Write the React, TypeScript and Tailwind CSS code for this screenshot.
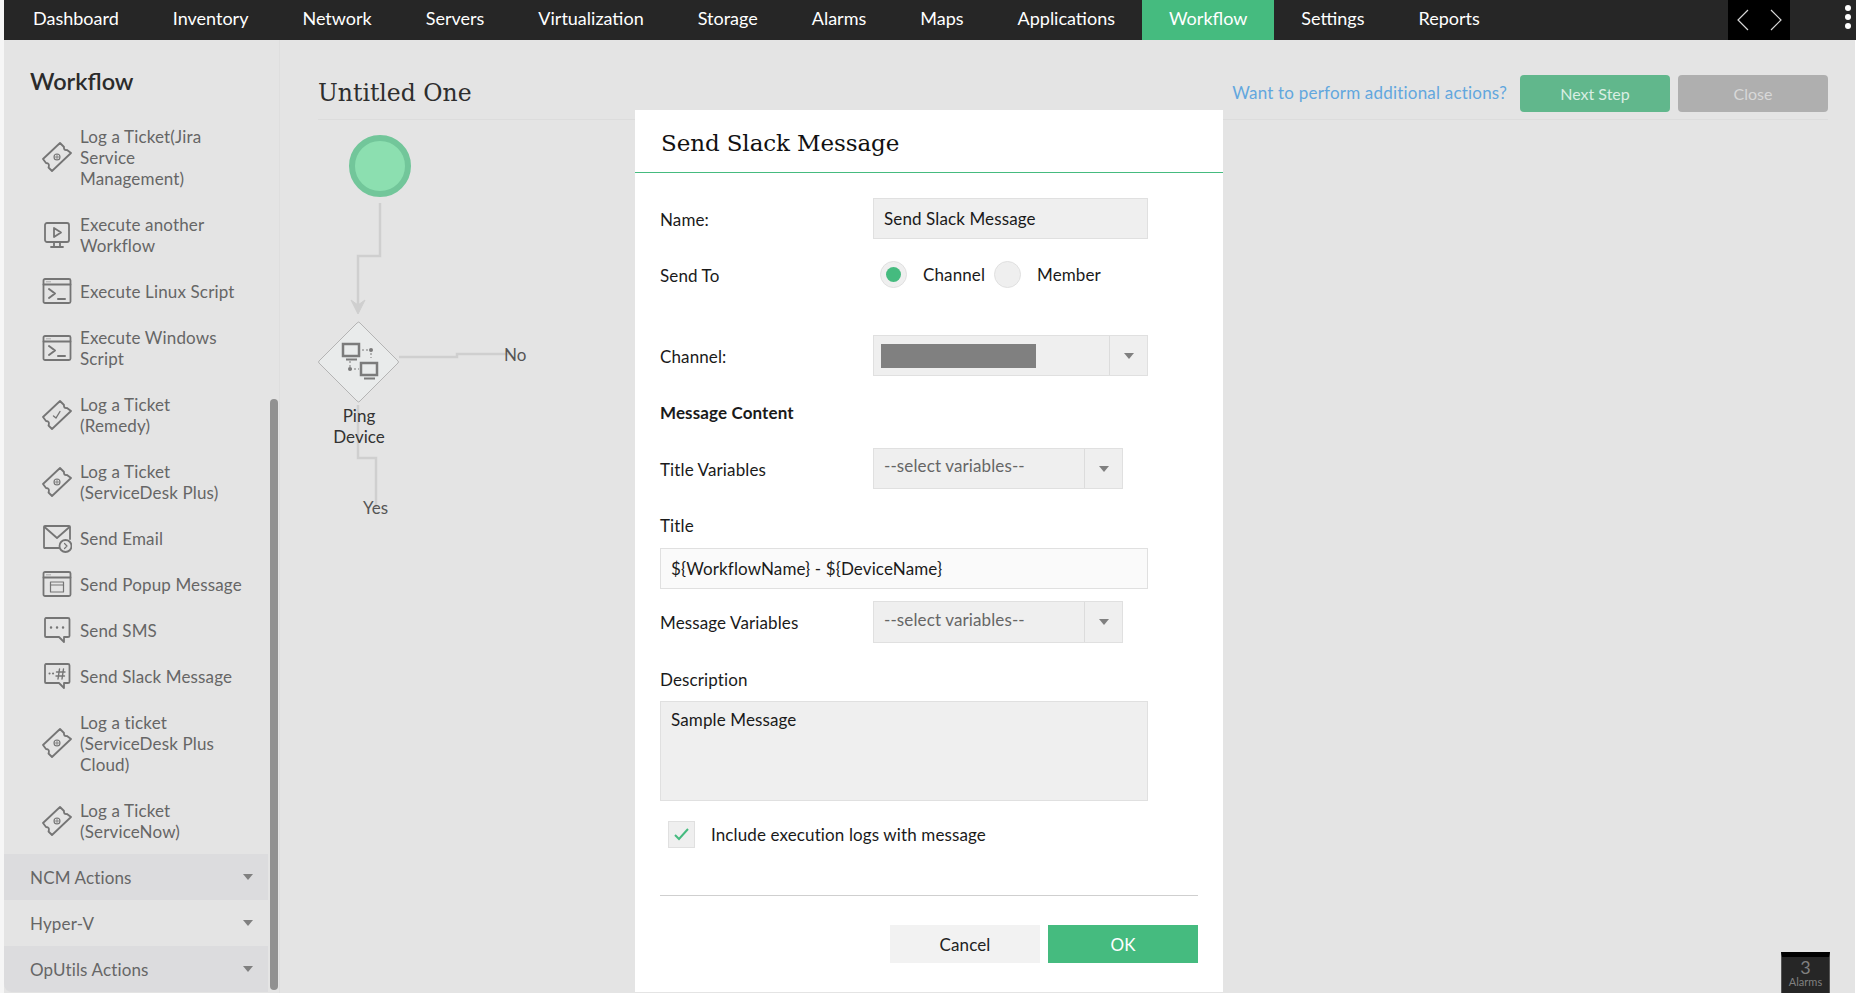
const navItems = ["Dashboard", "Inventory", "Network", "Servers", "Virtualization", "Storage", "Alarms", "Maps", "Applications", "Workflow", "Settings", "Reports"];

type IconName = "ticket" | "check" | "play" | "term" | "mail" | "popup" | "sms" | "slack";

const actions: { icon: IconName; lines: string[] }[] = [
  { icon: "ticket", lines: ["Log a Ticket(Jira", "Service", "Management)"] },
  { icon: "play", lines: ["Execute another", "Workflow"] },
  { icon: "term", lines: ["Execute Linux Script"] },
  { icon: "term", lines: ["Execute Windows", "Script"] },
  { icon: "check", lines: ["Log a Ticket", "(Remedy)"] },
  { icon: "ticket", lines: ["Log a Ticket", "(ServiceDesk Plus)"] },
  { icon: "mail", lines: ["Send Email"] },
  { icon: "popup", lines: ["Send Popup Message"] },
  { icon: "sms", lines: ["Send SMS"] },
  { icon: "slack", lines: ["Send Slack Message"] },
  { icon: "ticket", lines: ["Log a ticket", "(ServiceDesk Plus", "Cloud)"] },
  { icon: "ticket", lines: ["Log a Ticket", "(ServiceNow)"] },
];

function ActionIcon({ name }: { name: IconName }) {
  const common = { fill: "none", stroke: "#757575", strokeWidth: 1.8, strokeLinejoin: "round" as const, strokeLinecap: "round" as const, className: "-my-[5px] shrink-0" };
  if (name === "ticket" || name === "check") {
    return (
      <svg width="30" height="30" viewBox="0 0 30 30" {...common}>
        <path d="M1 17 L18 1 L22 5 Q21.5 8.5 25 8 L29 11 L10 29 L6.5 25.5 Q8 21 4 21 Z" />
        {name === "ticket" ? (
          <>
            <circle cx="15" cy="15" r="3" strokeWidth="1.1" />
            <path d="M12.5 15 H17.5 M15 12.5 V17.5" strokeWidth="0.8" />
          </>
        ) : (
          <path d="M11.5 16 L14 18 L18 11.5" strokeWidth="1.4" />
        )}
      </svg>
    );
  }
  if (name === "play") {
    return (
      <svg width="30" height="30" viewBox="0 0 30 30" {...common}>
        <rect x="3" y="3" width="24" height="19" rx="2" />
        <path d="M12 8 L19 12.5 L12 17 Z" />
        <path d="M12 22 V27 M18 22 V27 M9 27 H21" />
      </svg>
    );
  }
  if (name === "term") {
    return (
      <svg width="30" height="30" viewBox="0 0 30 30" {...common}>
        <rect x="1.5" y="3" width="27" height="24" rx="1.5" />
        <path d="M1.5 8.5 H28.5" />
        <path d="M4.5 5.8 H9" strokeWidth="1" strokeDasharray="1 1" strokeLinecap="butt" />
        <path d="M7 13 L13 17.5 L7 22 M16 23 H23" strokeWidth="2" />
      </svg>
    );
  }
  if (name === "mail") {
    return (
      <svg width="30" height="30" viewBox="0 0 30 30" {...common}>
        <path d="M17 25 H2.5 Q2 25 2 24 V4 Q2 3 3 3 H27 Q28 3 28 4 V16" />
        <path d="M2.5 4 L15 15 L27.5 4" />
        <circle cx="23.5" cy="23" r="6" />
        <path d="M22.5 20.5 L25 23 L22.5 25.5" strokeWidth="1.2" />
      </svg>
    );
  }
  if (name === "popup") {
    return (
      <svg width="30" height="30" viewBox="0 0 30 30" {...common}>
        <rect x="1.5" y="3" width="27" height="24" rx="1.5" />
        <path d="M1.5 8.5 H28.5" />
        <path d="M4.5 5.8 H9" strokeWidth="1" strokeDasharray="1 1" strokeLinecap="butt" />
        <rect x="8.5" y="13" width="13" height="10" strokeWidth="1.2" />
        <path d="M8.5 16 H21.5" strokeWidth="1.2" />
      </svg>
    );
  }
  return (
    <svg width="30" height="30" viewBox="0 0 30 30" {...common}>
      <path d="M4 3 H26 Q27.5 3 27.5 4.5 V21 Q27.5 22 26 22 H22 V27 L17 22 H4 Q3 22 3 21 V4.5 Q3 3 4 3 Z" />
      {name === "sms" ? (
        <path d="M9 12.5 H9.1 M15 12.5 H15.1 M21 12.5 H21.1" strokeWidth="2.4" />
      ) : (
        <>
          <path d="M7.5 12.5 H7.6 M11 12.5 H11.1" strokeWidth="2" />
          <path d="M17.5 8 L16 18 M21.5 8 L20 18 M14.5 11 H23 M14 15 H22.5" strokeWidth="1.4" />
        </>
      )}
    </svg>
  );
}

function Caret({ className = "" }: { className?: string }) {
  return <span className={"block w-0 h-0 border-l-[5px] border-r-[5px] border-t-[6px] border-l-transparent border-r-transparent border-t-[#808080] " + className} />;
}

function SelectBox({ width, sep, h = "h-[41px]", children }: { width: string; sep: string; h?: string; children?: React.ReactNode }) {
  return (
    <div className={`flex ${width} ${h} bg-[#efefef] border border-[#e0e0e0]`}>
      <div className="flex-1 min-w-0 flex items-center">{children}</div>
      <div className={`${sep} flex items-center justify-center border-l border-[#dcdcdc]`}>
        <Caret />
      </div>
    </div>
  );
}

function FlowCanvas() {
  return (
    <div className="relative flex-1">
      <svg width="300" height="420" className="absolute left-0 top-0" viewBox="0 0 300 420" fill="none">
        <circle cx="62" cy="46" r="28" fill="#8cdfb0" stroke="#72c69a" strokeWidth="6" />
        <path d="M62 83 V136 H40 V190" stroke="#cfcfcf" strokeWidth="2.5" />
        <path d="M33 180 L40 194 L47 180 L40 185 Z" fill="#cfcfcf" stroke="#cfcfcf" />
        <path d="M42 203 L80 241 Q81 242 80 243 L42 281 Q41 283 39 281 L1 243 Q0 242 1 241 L39 203 Q41 201 42 203 Z" fill="#e9ebeb" stroke="#b4b4b4" />
        <path d="M81 237 H139 V234 H192" stroke="#cfcfcf" strokeWidth="2.5" />
        <path d="M40 285 V338 H58 V388" stroke="#cfcfcf" strokeWidth="2.5" />
        <g stroke="#7b7b7b" fill="none">
          <rect x="25" y="224" width="16" height="12" strokeWidth="2.5" />
          <path d="M28 239.5 H39" strokeWidth="2" />
          <rect x="43" y="243" width="16" height="12" strokeWidth="2.5" />
          <path d="M46 258.5 H57" strokeWidth="2" />
          <path d="M44 230 H53 V238 M32 241 V249 H41" strokeWidth="1" strokeDasharray="2 2" />
        </g>
        <circle cx="53" cy="230" r="2" fill="#7b7b7b" />
        <circle cx="32" cy="249" r="2" fill="#7b7b7b" />
      </svg>
      <div className="absolute left-[0px] top-[285px] w-[82px] text-center text-[17px] leading-[21px] text-[#333]">
        Ping
        <br />
        Device
      </div>
      <span className="absolute left-[186px] top-[224px] text-[17px] leading-[21px] text-[#555]">No</span>
      <span className="absolute left-[45px] top-[377px] text-[17px] leading-[21px] text-[#555]">Yes</span>
    </div>
  );
}

function SlackModal() {
  return (
    <div className="absolute left-[635px] top-[110px] w-[588px] h-[882px] bg-white text-[17px] leading-[21px] tracking-[0.12px] text-[#1a1a1a]">
      <div className="h-[63px] flex items-center pl-[26px] pt-[5px] border-b border-[#45bb7f] text-[23px] tracking-[-0.1px] text-[#111] [font-family:'DejaVu_Serif',serif]">
        Send Slack Message
      </div>
      <div className="pl-[25px] pr-[25px]">
        <div className="mt-[25px] flex items-center">
          <label className="w-[213px] pt-[2px]">Name:</label>
          <div className="w-[275px] h-[41px] flex items-center px-[10px] bg-[#efefef] border border-[#e0e0e0]">Send Slack Message</div>
        </div>
        <div className="mt-[22px] flex items-center h-[27px]">
          <label className="w-[220px] pt-[2px]">Send To</label>
          <span className="w-[27px] h-[27px] rounded-full bg-[#efefef] border border-[#e0e0e0] flex items-center justify-center">
            <span className="w-[15px] h-[15px] rounded-full bg-[#45bb7f]" />
          </span>
          <span className="ml-[16px] w-[71px]">Channel</span>
          <span className="w-[27px] h-[27px] rounded-full bg-[#efefef] border border-[#e0e0e0]" />
          <span className="ml-[16px]">Member</span>
        </div>
        <div className="mt-[47px] flex items-center">
          <label className="w-[213px] pt-[2px]">Channel:</label>
          <SelectBox width="w-[275px]" sep="w-[38px]">
            <span className="ml-[7px] w-[155px] h-[24px] bg-[#808080]" />
          </SelectBox>
        </div>
        <div className="mt-[26px] font-bold">Message Content</div>
        <div className="mt-[25px] flex items-center">
          <label className="w-[213px] pt-[2px]">Title Variables</label>
          <SelectBox width="w-[250px]" sep="w-[38px]">
            <span className="ml-[10px] -mt-[6px] text-[#666]">--select variables--</span>
          </SelectBox>
        </div>
        <div className="mt-[26px]">Title</div>
        <div className="mt-[12px] w-[488px] h-[41px] flex items-center px-[10px] bg-[#fafafa] border border-[#e0e0e0]">
          {"${WorkflowName} - ${DeviceName}"}
        </div>
        <div className="mt-[12px] flex items-center">
          <label className="w-[213px]">Message Variables</label>
          <SelectBox width="w-[250px]" sep="w-[38px]" h="h-[42px]">
            <span className="ml-[10px] -mt-[6px] text-[#666]">--select variables--</span>
          </SelectBox>
        </div>
        <div className="mt-[26px]">Description</div>
        <div className="mt-[11px] w-[488px] h-[100px] px-[10px] pt-[7px] bg-[#efefef] border border-[#e0e0e0]">Sample Message</div>
        <div className="mt-[20px] ml-[8px] flex items-center h-[27px]">
          <span className="w-[27px] h-[27px] bg-[#efefef] border border-[#e0e0e0] flex items-center justify-center">
            <svg width="15" height="13" viewBox="0 0 15 13" fill="none" stroke="#45bb7f" strokeWidth="2">
              <path d="M1 7 L5 11 L14 1" />
            </svg>
          </span>
          <span className="ml-[16px]">Include execution logs with message</span>
        </div>
        <div className="mt-[47px] h-px bg-[#cfcfcf] w-[538px]" />
        <div className="mt-[29px] w-[538px] flex justify-end gap-[8px]">
          <button className="w-[150px] h-[38px] bg-[#f2f2f2] text-[#222]">Cancel</button>
          <button className="w-[150px] h-[38px] bg-[#45bb7f] text-white">OK</button>
        </div>
      </div>
    </div>
  );
}

export default function App() {
  return (
    <div className="relative h-[993px] overflow-hidden bg-[#f6f6f6] flex flex-col pl-[4px] [font-family:Lato,sans-serif]">
      <header className="h-[40px] shrink-0 bg-[#262626] flex items-stretch text-white text-[18px]">
        <nav className="flex items-stretch ml-[2px]">
          {navItems.map((item) => (
            <a key={item} className={"px-[27px] pb-[3px] flex items-center " + (item === "Workflow" ? "bg-[#45bb7f]" : "")}>
              {item}
            </a>
          ))}
        </nav>
        <div className="ml-auto mr-[66px] w-[62px] bg-black flex items-center pl-[8px] gap-[19px]">
          <svg width="14" height="22" viewBox="0 0 14 22" fill="none" stroke="#d8d8d8" strokeWidth="1.2"><path d="M12 1 L2 11 L12 21" /></svg>
          <svg width="14" height="22" viewBox="0 0 14 22" fill="none" stroke="#d8d8d8" strokeWidth="1.2"><path d="M2 1 L12 11 L2 21" /></svg>
        </div>
        <div className="absolute right-[5px] top-[5px] flex flex-col gap-[3px]">
          <span className="w-[6px] h-[6px] rounded-full bg-white" />
          <span className="w-[6px] h-[6px] rounded-full bg-white" />
          <span className="w-[6px] h-[6px] rounded-full bg-white" />
        </div>
      </header>

      <div className="flex-1 flex min-h-0 bg-[#e4e4e4] border-r border-white">
        <aside className="w-[276px] shrink-0 flex flex-col border-r border-[#dedede]">
          <h2 className="h-[73px] pl-[26px] pt-[24px] text-[23.5px] leading-[34px] font-semibold text-[#2b2b2b]">Workflow</h2>
          <div className="flex-1 flex min-h-0">
            <div className="w-[264px] shrink-0">
              {actions.map((a, i) => (
                <div key={i} className="flex items-center pl-[38px] py-[12.5px]">
                  <ActionIcon name={a.icon} />
                  <div className="ml-[8px] text-[17px] leading-[21px] tracking-[0.15px] text-[#666]">
                    {a.lines.map((l) => (
                      <div key={l}>{l}</div>
                    ))}
                  </div>
                </div>
              ))}
              {["NCM Actions", "Hyper-V", "OpUtils Actions"].map((s, i) => (
                <div key={s} className={"h-[46px] flex items-center justify-between pl-[26px] pr-[15px] text-[17px] tracking-[0.15px] text-[#666] " + (i % 2 === 0 ? "bg-[#dcdcde] " : "") + (i === 2 ? "rounded-bl-[8px]" : "")}>
                  <span className="pt-[2px]">{s}</span>
                  <Caret className="border-t-[#9a9a9a] border-l-[5.5px] border-r-[5.5px]" />
                </div>
              ))}
            </div>
            <div className="relative flex-1">
              <span className="absolute left-[2px] top-[286px] bottom-[3px] w-[8px] rounded-[4px] bg-[#919191]" />
            </div>
          </div>
        </aside>

        <main className="flex-1 flex flex-col min-w-0 pl-[38px] pr-[27px]">
          <div className="h-[80px] shrink-0 flex items-start border-b border-[#dcdcdc]">
            <h1 className="mt-[36px] text-[23.5px] leading-[34px] text-[#2e2e2e] [font-family:'DejaVu_Serif',serif]">Untitled One</h1>
            <a className="ml-auto mt-[41px] text-[17px] leading-[24px] tracking-[0.2px] text-[#62a7de]">Want to perform additional actions?</a>
            <button className="ml-[13px] mt-[35px] w-[150px] h-[37px] rounded-[4px] bg-[#61b78c] text-[16px] text-[#d9eee3]">Next Step</button>
            <button className="ml-[8px] mt-[35px] w-[150px] h-[37px] rounded-[4px] bg-[#afafaf] text-[16px] text-[#d8d8d8]">Close</button>
          </div>
          <FlowCanvas />
        </main>
      </div>

      <SlackModal />

      <div className="absolute left-[1781px] top-[952px] w-[49px] h-[41px] bg-[#262626] border-t-[5px] border-t-black border-x border-x-[#555] flex flex-col items-center text-[#808080] leading-none">
        <span className="text-[18px] mt-[1px]">3</span>
        <span className="text-[11px]">Alarms</span>
      </div>
    </div>
  );
}
